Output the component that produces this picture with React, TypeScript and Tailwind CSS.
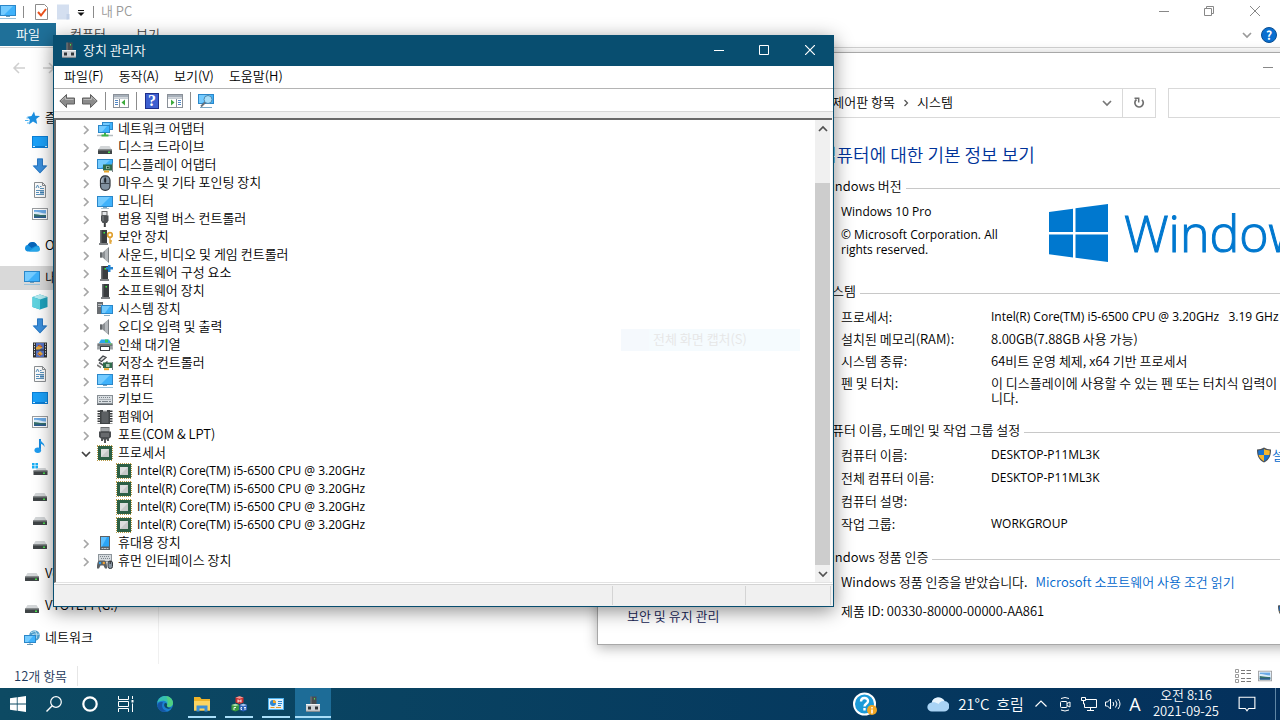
import type { ReactNode } from 'react';

type IconProps = { className?: string };

function Svg({ children, className = 'size-4', box = 16 }: { children: ReactNode; className?: string; box?: number }) {
  return (
    <svg viewBox={`0 0 ${box} ${box}`} className={`${className} shrink-0`} aria-hidden="true" fill="none">
      {children}
    </svg>
  );
}

/* ---------- device and folder icons ---------- */

function Screen({ x = 0, y = 2, w = 16, h = 10 }: { x?: number; y?: number; w?: number; h?: number }) {
  return (
    <>
      <rect x={x} y={y} width={w} height={h} fill="#2b87c9" />
      <rect x={x + 1} y={y + 1} width={w - 2} height={h - 2} fill="#3fb2fb" />
      <path d={`M${x + 1} ${y + 1}h${w - 4}L${x + 4} ${y + h - 1}H${x + 1}z`} fill="#74cbff" />
    </>
  );
}

const IconComputer = ({ className }: IconProps) => (
  <Svg className={className}>
    <Screen y={1} h={11} />
    <path d="M6 12.5h4" stroke="#6d9dbb" />
    <path d="M0 14.500h16" stroke="#9cc3da" />
  </Svg>
);
const IconMonitor = () => (
  <Svg>
    <Screen y={3} h={11} />
    <path d="M6 14.500h4" stroke="#7aa7c4" />
    <path d="M4 15.500h8" stroke="#a8c2d2" />
  </Svg>
);
const IconNetAdapter = () => (
  <Svg>
    <Screen x={5} y={1} w={11} h={8} />
    <Screen x={1} y={4} w={12} h={8} />
    <path d="M0 14.500h16" stroke="#b4bcc0" strokeWidth="1.500" />
    <path d="M7 12h2v1.500h2.500v2h-7v-2H7z" fill="#3fb54a" />
  </Svg>
);
const IconDisk = ({ className }: IconProps) => (
  <Svg className={className}>
    <path d="M3.500 7h9L15 11H1z" fill="#d3d6d8" />
    <rect x="1" y="10.500" width="14" height="4.500" rx="0.500" fill="#3f4446" />
    <rect x="1" y="10.500" width="14" height="1" fill="#85898b" />
    <rect x="11" y="12.500" width="2" height="1.500" fill="#49e04f" />
  </Svg>
);
const IconDisplay = () => (
  <Svg>
    <Screen y={2} h={10} />
    <rect x="6" y="7.500" width="10" height="6" fill="#2f6b4b" />
    <rect x="9" y="9" width="3.500" height="3" fill="#8fb79e" />
    <rect x="10" y="9.800" width="1.800" height="1.500" fill="#1d3c2c" />
    <path d="M7 14.500h5" stroke="#e7a52a" strokeWidth="2" />
    <path d="M15.500 6v9" stroke="#7c8488" />
  </Svg>
);
const IconMouse = () => (
  <Svg>
    <rect x="3.500" y="0.800" width="9.500" height="14.500" rx="4.500" fill="#8191a0" stroke="#30363c" strokeWidth="1.200" />
    <path d="M8.200 1.500v7M4 8.500h8.500" stroke="#3c4650" />
    <rect x="7.200" y="3" width="2" height="4.500" rx="1" fill="#20262c" />
    <path d="M5.500 3.500c-.8 1-.8 3-.8 4" stroke="#c6d1da" />
  </Svg>
);
const IconUsb = () => (
  <Svg>
    <rect x="5" y="0.500" width="5" height="4" fill="#e4e6e8" stroke="#666" />
    <path d="M4 4.500h7.500v5L10 12H5.500L4 9.500z" fill="#4d5052" />
    <path d="M6 5v5" stroke="#84878a" />
    <path d="M7.800 12v4" stroke="#3b3d3e" strokeWidth="2" />
  </Svg>
);
function Tower({ x = 5 }: { x?: number }) {
  return (
    <>
      <rect x={x} y="1" width="7" height="13" fill="#3a3d40" />
      <rect x={x} y="1" width="1.500" height="13" fill="#6b6f73" />
      <rect x={x + 3.5} y="3" width="1.500" height="1.500" fill="#39ee43" />
      <path d={`M${x - 1} 15h9`} stroke="#55595c" strokeWidth="1.500" />
    </>
  );
}
const IconSecurity = () => (
  <Svg>
    <Tower x={3} />
    <circle cx="13" cy="6" r="2.300" stroke="#e0a02e" strokeWidth="1.700" />
    <path d="M13 8v6.500M13 12h2M13 14h1.500" stroke="#e0a02e" strokeWidth="1.300" />
  </Svg>
);
const IconSoftComponent = () => (
  <Svg>
    <Tower x={4} />
    <path d="M11 0h2.500v2H16v2.500h-2.500V7H11V4.500H9V2h2z" fill="#2583cf" />
  </Svg>
);
const IconSoftDevice = () => (
  <Svg>
    <Tower x={5} />
  </Svg>
);
const IconSpeaker = () => (
  <Svg>
    <path d="M3 5.500h2.500L11.500 0.500v15L5.500 10.500H3z" fill="#8c9094" />
    <path d="M8 3.500L11.500 0.500v15L8 12.500z" fill="#b4b8bc" />
    <path d="M3 5.500h2v5H3z" fill="#64686c" />
    <path d="M11.500 0.500v15" stroke="#7c8084" />
  </Svg>
);
const IconSystemDevice = () => (
  <Svg>
    <rect x="0" y="1" width="6" height="12" fill="#6a6e72" />
    <path d="M1 3.500h4M1 5.500h4" stroke="#b8bcc0" />
    <Screen x={4} y={4} w={12} h={9} />
    <path d="M7 14.500h6" stroke="#8aaec4" />
  </Svg>
);
const IconPrinter = () => (
  <Svg>
    <path d="M4 2.500h8l2 3.500H2z" fill="#2fa6e8" />
    <rect x="8" y="2.500" width="3" height="3" fill="#36c95a" />
    <path d="M0.500 6h15l.5 6.500H0z" fill="#9ba0a3" />
    <path d="M0.500 8h15" stroke="#4a4f52" />
    <rect x="3.500" y="9.500" width="9" height="4" fill="#fff" stroke="#3d4144" />
    <rect x="12.500" y="6.500" width="2" height="1" fill="#4de05a" />
  </Svg>
);
const IconStorage = () => (
  <Svg>
    <path d="M2 5l4-4 3 1.500-4.500 4z" stroke="#45494c" strokeWidth="1.300" fill="#e4e4e4" />
    <path d="M2 7.500l4.500 3 4-4" stroke="#55595c" strokeWidth="1.600" />
    <rect x="6" y="7.500" width="9" height="5.500" fill="#2f6b4b" />
    <rect x="9" y="9" width="3.500" height="3" fill="#a9c9b6" />
    <path d="M7 14.200h5" stroke="#e7a52a" strokeWidth="2" />
    <path d="M15.500 7v8" stroke="#70787c" />
    <path d="M0 10l4 2.500" stroke="#777" strokeWidth="1.500" />
  </Svg>
);
const IconKeyboard = () => (
  <Svg>
    <rect x="0.500" y="4.500" width="15" height="8" fill="#d9dee2" stroke="#878e94" />
    <path d="M2 6.500h12M2.500 8.500h11" stroke="#7a838a" strokeDasharray="1 1" />
    <path d="M2 10.500h2m1 0h6m1 0h2" stroke="#7a838a" />
    <path d="M0 13.500h16" stroke="#62686d" />
  </Svg>
);
const IconFirmware = () => (
  <Svg>
    <path d="M2 1.500v13M14 1.500v13" stroke="#3a3d3f" strokeWidth="3" strokeDasharray="1.500 1" />
    <rect x="3" y="1" width="10" height="14" fill="#3f4345" />
    <path d="M4.500 3h7v11h-7z" fill="#5c6063" />
    <path d="M6 1h4v1.500H6z" fill="#d0d2d3" />
  </Svg>
);
const IconPort = () => (
  <Svg>
    <rect x="4" y="0.500" width="8" height="4" fill="#c9cccf" stroke="#6b6e70" />
    <path d="M6 1v3M8 1v3M10 1v3" stroke="#7d8082" />
    <path d="M2 4.500h12v5.500l-3 2.500H5L2 10z" fill="#4a4d50" />
    <path d="M4 7h8M4 9h8" stroke="#85888b" />
    <path d="M8 12v4M5 12v2M11 12v2" stroke="#45484a" strokeWidth="1.800" />
  </Svg>
);
const IconCpu = () => (
  <Svg>
    <path d="M0 .5h15M0 15.500h15M.5 1v14M15.500 1v14" stroke="#b99a45" strokeDasharray="1 1" />
    <rect x="1" y="1" width="14" height="14" fill="#2c5f45" />
    <rect x="4" y="4" width="8" height="8" fill="#dcdede" />
    <path d="M12 4v8H4z" fill="#c6c9c9" />
  </Svg>
);
const IconPortable = () => (
  <Svg>
    <rect x="3" y="1" width="10" height="14" fill="#5c6165" />
    <rect x="4" y="2" width="8" height="9.500" fill="#2ba5f7" />
    <path d="M4 2h6L5 11.500H4z" fill="#5fc0ff" />
    <path d="M4.500 13.500h7" stroke="#c0c5c9" strokeDasharray="2 0.500" />
  </Svg>
);
const IconHid = () => (
  <Svg>
    <rect x="1.500" y="1.500" width="13" height="7" fill="#d5dade" stroke="#8d959b" />
    <path d="M3 3.500h10M4 5.500h9" stroke="#7b848b" strokeDasharray="1 1" />
    <path d="M0 15.500c-.3-4 .8-8 2.500-8h5c1.700 0 2.800 4 2.500 8H8l-1.500-3h-3l-1.500 3z" fill="#5b6064" />
    <circle cx="3" cy="10" r="1.200" fill="#35a0e8" />
    <circle cx="6.800" cy="10" r="1.200" fill="#f0a030" />
    <rect x="11" y="8" width="4.500" height="7.500" rx="2" fill="#8794a0" stroke="#34393e" />
    <path d="M13.200 8v3" stroke="#222" />
  </Svg>
);
const IconDevMgr = () => (
  <Svg>
    <rect x="5.500" y="0.500" width="6" height="8" fill="#4a4e52" />
    <path d="M6 0.500v8" stroke="#7b7f83" />
    <rect x="9" y="2" width="1" height="1.500" fill="#4be050" />
    <rect x="1" y="8" width="14" height="7.500" rx="1" fill="#cfd3d6" />
    <path d="M1 8.500h14" stroke="#f2f3f4" />
    <rect x="3" y="10.500" width="3" height="3" fill="#32363a" />
    <rect x="10" y="10.500" width="3" height="3" fill="#32363a" />
    <path d="M1 15.300h14" stroke="#85898d" />
  </Svg>
);

const IconStar = () => (
  <Svg>
    <path d="M10 1.500l1.200 4.200 4.800.3-3.800 3 1 5-4.200-2.600-4 3.100.8-4.800-2.600-3 4.300-.7z" fill="#1c8fe0" />
    <path d="M1 10.500h3.500M3 13h2.500M2.500 8h2" stroke="#4bb3f2" />
  </Svg>
);
const IconDesktop = () => (
  <Svg>
    <rect x="0" y="2" width="16" height="12" fill="#0c7fd6" />
    <rect x="1" y="3" width="14" height="9" fill="#1ba1f8" />
    <path d="M1 12.500h2M13 12.500h2" stroke="#d4efff" />
  </Svg>
);
const IconDownload = () => (
  <Svg>
    <path d="M5 0.500h6v7h4.500L8 15.500.5 7.500H5z" fill="#3b8fdc" />
    <path d="M5.500 1h5v7h3.800L8 14.800 1.700 8h3.800z" stroke="#2672bd" strokeWidth="0.800" />
  </Svg>
);
const IconDoc = () => (
  <Svg>
    <path d="M2.500 0.500h8l3 3v12h-11z" fill="#fdfdfd" stroke="#8b8f92" />
    <path d="M10.500 0.500v3h3" stroke="#8b8f92" />
    <path d="M4 6l1.500-3L7 6M8 4.500h1.500M8 6.500h4M4 8.500h8M4 10.500h3M4 12.500h8" stroke="#5b93bd" />
    <rect x="8" y="9.500" width="4" height="2" fill="#3f7fb2" />
  </Svg>
);
const IconPicture = ({ className }: IconProps) => (
  <Svg className={className}>
    <rect x="0.500" y="2.500" width="15" height="11" fill="#fff" stroke="#9a9da0" />
    <rect x="2" y="4" width="12" height="8" fill="#6aa9e6" />
    <path d="M2 6c3-1 7 1.500 12 1.500V9H2z" fill="#dcecf8" />
    <path d="M2 8c3 0 6 1.500 12 1v3H2z" fill="#36706a" />
    <path d="M2 10.500h12V12H2z" fill="#2c5b93" />
  </Svg>
);
const IconOneDrive = () => (
  <Svg>
    <path d="M3.500 13.500a3.500 3.500 0 01.3-6.800A5 5 0 0113 7.200a3.200 3.200 0 01-.2 6.300z" fill="#1490df" />
    <path d="M3.800 6.700A5 5 0 0113 7.200L7.500 10z" fill="#0864b8" />
    <path d="M5 13.500l6-4.500c3-1.500 5 .5 5 2.500 0 1.500-1.500 2-2.500 2z" fill="#28a8ea" />
  </Svg>
);
const Icon3D = () => (
  <Svg>
    <path d="M8 0.500l7.500 2.500v10L8 15.500.5 13V3z" fill="#1fa3bd" />
    <path d="M8 0.500l7.500 2.500L8 5.500.5 3z" fill="#b5ecf2" />
    <path d="M.5 3L8 5.500v10L.5 13z" fill="#5fd3df" />
  </Svg>
);
const IconVideo = () => (
  <Svg>
    <rect x="1" y="0.500" width="14" height="15" fill="#2f3133" />
    <path d="M2.500 1.500v13M13.500 1.500v13" stroke="#e9e9e9" strokeDasharray="1.300 1.300" />
    <rect x="4" y="1" width="8" height="6.500" fill="#5673c4" />
    <rect x="4" y="8.500" width="8" height="6.500" fill="#5673c4" />
    <path d="M4 5.500l4-3 2.500 3-3 2h-3.500zM5 12l3-3 3 3-3 2z" fill="#e7a93a" />
    <path d="M6 3.500l4 1M6 11.500l3 2" stroke="#b8452c" />
  </Svg>
);
const IconMusic = () => (
  <Svg>
    <path d="M8 1v10.500" stroke="#1588dd" strokeWidth="2" />
    <path d="M8 0.500c0 3.500 5 4 4.500 8.500-1-2.500-3-3-4.500-3z" fill="#1e9cf0" />
    <ellipse cx="5.800" cy="12.300" rx="3.300" ry="2.700" fill="#1e9cf0" />
  </Svg>
);
const IconSystemDisk = () => (
  <Svg>
    <path d="M0 1h2.600v2.400H0zM3.400 1H6v2.400H3.400zM0 4.100h2.600v2.400H0zM3.400 4.100H6v2.400H3.400z" fill="#18aef5" />
    <path d="M6.500 6h7l1.500 3H2z" fill="#d3d6d8" />
    <rect x="1.500" y="8.500" width="14" height="4.500" fill="#3f4446" />
    <rect x="1.500" y="8.500" width="14" height="1" fill="#85898b" />
    <rect x="11" y="10.500" width="2" height="1.500" fill="#49e04f" />
  </Svg>
);
const IconNetwork = () => (
  <Svg>
    <circle cx="10.500" cy="5.500" r="5.300" fill="#4c9cc9" />
    <path d="M7 2.500c2 0 3-1.500 5-1.500M8 5c3-2 5 0 7.500-1M10.500.5c3 3 3 7 0 10" stroke="#b8dff2" />
    <Screen x={0} y={5} w={12} h={8} />
    <path d="M3 14.500h6M6 13v2" stroke="#6b97b3" />
  </Svg>
);

function Chevron({ className, dir = 'right' }: IconProps & { dir?: 'right' | 'down' | 'up' }) {
  const d = { right: 'M3 1l4 4-4 4', down: 'M1 3l4 4 4-4', up: 'M1 7l4-4 4 4' }[dir];
  return (
    <Svg box={10} className={`size-2.5 ${className ?? ''}`}>
      <path d={d} stroke="currentColor" strokeWidth="1.700" />
    </Svg>
  );
}

function Shield() {
  return (
    <Svg>
      <path d="M8 .5c2 1.300 4.500 2 7 2 0 6-1.500 10.500-7 13C2.500 13 1 8.500 1 2.500c2.500 0 5-.7 7-2z" fill="#4a4f55" />
      <path d="M8 2v6H2.600C2.300 6.500 2.200 5 2.200 3.500 4.300 3.400 6.300 3 8 2z" fill="#1a73cf" />
      <path d="M8 2v6h5.400c.3-1.500.4-3 .4-4.500C11.700 3.400 9.700 3 8 2z" fill="#f7b62b" />
      <path d="M2.600 8H8v6.200C5 12.800 3.300 10.800 2.600 8z" fill="#f7b62b" />
      <path d="M13.400 8H8v6.200c3-1.400 4.700-3.400 5.400-6.200z" fill="#1a73cf" />
    </Svg>
  );
}

/* ---------- file explorer ---------- */

function NavItem({ icon, label, child, active }: { icon: ReactNode; label: string; child?: boolean; active?: boolean }) {
  return (
    <li className={active ? 'bg-[#d9d9d9]' : ''}>
      <a
        href="#"
        aria-label={label}
        className={`flex h-6 items-center gap-[5px] whitespace-nowrap text-black ${child ? 'pl-8' : 'pl-6'}`}
      >
        {icon}
        {!child && <span className="pb-0.5">{label}</span>}
      </a>
    </li>
  );
}

function Explorer() {
  return (
    <section aria-label="내 PC" className="flex min-h-0 flex-1 flex-col bg-white">
      <header className="flex h-[23px] items-center text-[#999]">
        <IconComputer />
        <span className="ml-[7px] h-3 w-px bg-[#8a8a8a]" />
        <button aria-label="속성" className="ml-2.5">
          <Svg>
            <path d="M1.500 0.500h9l3 3v12h-12z" fill="#fff" stroke="#8c8c8c" />
            <path d="M4 8l3 3.500L12 5" stroke="#e8501c" strokeWidth="2" />
          </Svg>
        </button>
        <button aria-label="새 폴더" className="ml-1.5">
          <Svg>
            <path d="M1 0.500h12v13l-1.500 2H1z" fill="#d4dff0" />
            <path d="M10.500 10h3v5.500h-3z" fill="#c2d1e8" />
          </Svg>
        </button>
        <button aria-label="사용자 지정" className="ml-1">
          <Svg box={10} className="size-2.5">
            <path d="M2 3.500h6" stroke="#111" />
            <path d="M1.500 5.500h7L5 9z" fill="#111" />
          </Svg>
        </button>
        <span className="ml-[7px] h-3 w-px bg-[#8a8a8a]" />
        <h1 className="ml-[7px] flex-1 pb-0.5">내 PC</h1>
        <div className="flex items-center">
          <button aria-label="최소화" className="flex w-[45px] justify-center">
            <Svg box={10} className="size-2.5"><path d="M0 4.500h10" stroke="#888" /></Svg>
          </button>
          <button aria-label="이전 크기로" className="flex w-[46px] justify-center pb-0.5">
            <Svg box={10} className="size-2.5"><path d="M.5 2.500h7v7h-7zM2.500 2.500v-2h7v7h-2" stroke="#888" /></Svg>
          </button>
          <button aria-label="닫기" className="mr-0.5 flex w-[46px] justify-center pb-0.5">
            <Svg box={10} className="size-2.5"><path d="M0 0l10 10M10 0L0 10" stroke="#888" /></Svg>
          </button>
        </div>
      </header>

      <nav className="flex h-[25px] items-center border-b border-[#d4d4d4]">
        <button className="h-[23px] w-14 self-start bg-[#1f7099] pb-0.5 text-white">파일</button>
        <button className="w-16 pb-0.5 text-[#444]">컴퓨터</button>
        <button className="w-14 pb-0.5 text-[#444]">보기</button>
        <span className="flex-1" />
        <button aria-label="리본 확장" className="mr-[9px] text-[#9a9a9a]">
          <Chevron dir="down" />
        </button>
        <button aria-label="도움말" className="mr-[3px]">
          <span className="flex size-4 items-center justify-center rounded-full border border-[#0b4f92] bg-[#0a6fd0] text-xs font-bold text-white">?</span>
        </button>
      </nav>

      <div className="flex h-10 items-center gap-4 pl-3 text-[#cfcfcf]">
        <button aria-label="뒤로">
          <Svg box={14} className="size-3.5"><path d="M13 7H2M7 2L2 7l5 5" stroke="currentColor" strokeWidth="1.500" /></Svg>
        </button>
        <button aria-label="앞으로">
          <Svg box={14} className="size-3.5"><path d="M1 7h11M7 2l5 5-5 5" stroke="currentColor" strokeWidth="1.500" /></Svg>
        </button>
      </div>

      <div className="flex min-h-0 flex-1">
        <nav className="w-[159px] border-r border-[#f0f0f0] pt-[18px]">
          <ul className="flex flex-col gap-2">
            <li>
              <ul>
                <NavItem icon={<IconStar />} label="즐겨찾기" />
                <NavItem child icon={<IconDesktop />} label="바탕 화면" />
                <NavItem child icon={<IconDownload />} label="다운로드" />
                <NavItem child icon={<IconDoc />} label="문서" />
                <NavItem child icon={<IconPicture />} label="사진" />
              </ul>
            </li>
            <NavItem icon={<IconOneDrive />} label="OneDrive" />
            <li>
              <ul>
                <NavItem active icon={<IconComputer />} label="내 PC" />
                <NavItem child icon={<Icon3D />} label="3D 개체" />
                <NavItem child icon={<IconDownload />} label="다운로드" />
                <NavItem child icon={<IconVideo />} label="동영상" />
                <NavItem child icon={<IconDoc />} label="문서" />
                <NavItem child icon={<IconDesktop />} label="바탕 화면" />
                <NavItem child icon={<IconPicture />} label="사진" />
                <NavItem child icon={<IconMusic />} label="음악" />
                <NavItem child icon={<IconSystemDisk />} label="로컬 디스크 (C:)" />
                <NavItem child icon={<IconDisk />} label="로컬 디스크 (D:)" />
                <NavItem child icon={<IconDisk />} label="로컬 디스크 (E:)" />
                <NavItem child icon={<IconDisk />} label="로컬 디스크 (F:)" />
              </ul>
            </li>
            <NavItem icon={<IconDisk />} label="Ventoy (F:)" />
            <NavItem icon={<IconDisk />} label="VTOYEFI (G:)" />
            <NavItem icon={<IconNetwork />} label="네트워크" />
          </ul>
        </nav>
        <div className="flex-1" />
      </div>

      <footer className="flex h-6 items-center pl-3.5 pr-2 text-[#1e395b]">
        <span className="w-16 border-r border-[#e6e6e6]">12개 항목</span>
        <span className="flex-1" />
        <button aria-label="자세히">
          <Svg>
            <path d="M.5 1.500h3v3h-3zM.5 6.500h3v3h-3zM.5 11.500h3v3h-3z" stroke="#9a9a9a" />
            <path d="M6 2.500h4m1.500 0H16M6 5.500h4m1.500 0H16M6 10.500h4m1.500 0H16M6 13.500h4m1.500 0H16" stroke="#777" />
          </Svg>
        </button>
        <button aria-label="큰 아이콘" className="ml-[7px]">
          <IconPicture className="size-3.5" />
        </button>
      </footer>
    </section>
  );
}

/* ---------- system information window ---------- */

function Legend({ children }: { children: ReactNode }) {
  return (
    <h3 className="flex h-4 items-center gap-1 whitespace-nowrap leading-4">
      <span className="pb-0.5">{children}</span>
      <span className="mt-0.5 h-px flex-1 bg-[#c8c8c8]" />
    </h3>
  );
}

const specs: [string, ReactNode, boolean][] = [
  ['프로세서:', 'Intel(R) Core(TM) i5-6500 CPU @ 3.20GHz   3.19 GHz', true],
  ['설치된 메모리(RAM):', '8.00GB(7.88GB 사용 가능)', false],
  ['시스템 종류:', '64비트 운영 체제, x64 기반 프로세서', false],
  ['펜 및 터치:', <>이 디스플레이에 사용할 수 있는 펜 또는 터치식 입력이 없습<br />니다.</>, false],
];

const names: [string, string][] = [
  ['컴퓨터 이름:', 'DESKTOP-P11ML3K'],
  ['전체 컴퓨터 이름:', 'DESKTOP-P11ML3K'],
  ['컴퓨터 설명:', ''],
  ['작업 그룹:', 'WORKGROUP'],
];

function SystemWindow() {
  return (
    <section
      aria-label="시스템"
      className="absolute left-[597px] top-[52px] w-[800px] border border-[#a8a8a8] bg-white shadow-[0_3px_12px_rgba(0,0,0,0.3)]"
    >
      <div className="flex h-[35px] items-center pl-[664px]">
        <button aria-label="최소화" className="mb-2">
          <Svg box={12} className="size-3"><path d="M1 6.500h10" stroke="#888" /></Svg>
        </button>
      </div>
      <div className="flex h-[30px]">
        <div className="ml-[142px] flex w-[416px] items-center border border-[#d9d9d9]">
          <div className="flex flex-1 items-center">
            <span className="w-[154px] pb-0.5 text-right">모든 제어판 항목</span>
            <Chevron className="mx-1.5 scale-75 text-[#555]" />
            <span className="pb-0.5">시스템</span>
          </div>
          <button aria-label="이전 위치" className="mr-2.5 text-[#777]"><Chevron dir="down" /></button>
          <button aria-label="새로 고침" className="flex h-full w-[33px] items-center justify-center border-l border-[#d9d9d9]">
            <Svg box={12} className="size-3">
              <path d="M9 2.800a4.200 4.200 0 11-5.500-.3" stroke="#707070" strokeWidth="1.700" />
              <path d="M1.500 1.200h4.200v4.200" stroke="#707070" strokeWidth="1.500" />
            </Svg>
          </button>
        </div>
        <input aria-label="제어판 검색" className="ml-3 w-[200px] border border-[#d9d9d9] px-2" />
      </div>

      <div className="flex">
        <aside className="flex w-[222px] shrink-0 items-end pb-[19px] pl-[29px]">
          <a href="#" className="text-[#151c55]">보안 및 유지 관리</a>
        </aside>
        <div className="min-w-0 flex-1 pb-[25px] pt-6">
          <h2 className="text-lg leading-6 whitespace-nowrap text-[#003399]">컴퓨터에 대한 기본 정보 보기</h2>

          <div className="mt-[13px]"><Legend>Windows 버전</Legend></div>
          <div className="flex items-start pl-[21px] font-['Open_Sans',sans-serif] text-xs leading-[15px] font-normal">
            <div className="w-[208px] shrink-0 pt-[9px]">
              <p className="leading-4">Windows 10 Pro</p>
              <p className="mt-[7px]">© Microsoft Corporation. All<br />rights reserved.</p>
            </div>
            <div className="-mb-2 flex items-center gap-4 pt-[9px]">
              <svg viewBox="0 0 59 58" className="h-[58px] w-[59px] shrink-0" aria-hidden="true">
                <path d="M0 8l24-3.300V28H0zM26.500 4.300L59 0v28H26.500zM0 30.500h24v23L0 50.200zM26.500 30.500H59V58l-32.500-4.300z" fill="#0078cf" />
              </svg>
              <span className="text-[50px] leading-[58px] font-light whitespace-nowrap text-[#0078cf] [-webkit-text-stroke:1px_#0078cf]">Windows 10</span>
            </div>
          </div>

          <div className="mt-[27px]"><Legend>시스템</Legend></div>
          <dl className="mt-[5px] pl-[21px] leading-[15px]">
            {specs.map(([k, v, latin]) => (
              <div key={k} className="flex pb-[3px] pt-1">
                <dt className="w-[150px] shrink-0">{k}</dt>
                <dd className={`whitespace-pre ${latin ? "font-['Open_Sans',sans-serif] text-xs leading-[15px] font-normal" : ''}`}>{v}</dd>
              </div>
            ))}
          </dl>

          <div className="mt-[15px]"><Legend>컴퓨터 이름, 도메인 및 작업 그룹 설정</Legend></div>
          <div className="mt-1 flex pl-[21px]">
            <dl className="w-[415px] shrink-0 leading-[15px]">
              {names.map(([k, v]) => (
                <div key={k} className="flex h-[23px] items-center">
                  <dt className="w-[150px]">{k}</dt>
                  <dd className="font-['Open_Sans',sans-serif] text-xs font-normal">{v}</dd>
                </div>
              ))}
            </dl>
            <a href="#" className="flex h-[23px] items-center whitespace-nowrap text-[#0066cc]">
              <Shield />설정 변경
            </a>
          </div>

          <div className="mt-[15px]"><Legend>Windows 정품 인증</Legend></div>
          <p className="mt-2 flex gap-2 whitespace-nowrap pl-[21px] leading-4">
            <span>Windows 정품 인증을 받았습니다.</span>
            <a href="#" className="text-[#0066cc]">Microsoft 소프트웨어 사용 조건 읽기</a>
          </p>
          <div className="mt-[13px] flex h-4 items-center pl-[21px] leading-4">
            <p className="w-[436px] shrink-0">제품 ID: 00330-80000-00000-AA861</p>
            <Shield />
          </div>
        </div>
      </div>
    </section>
  );
}

/* ---------- device manager ---------- */

const devices: [string, ReactNode][] = [
  ['네트워크 어댑터', <IconNetAdapter />],
  ['디스크 드라이브', <IconDisk />],
  ['디스플레이 어댑터', <IconDisplay />],
  ['마우스 및 기타 포인팅 장치', <IconMouse />],
  ['모니터', <IconMonitor />],
  ['범용 직렬 버스 컨트롤러', <IconUsb />],
  ['보안 장치', <IconSecurity />],
  ['사운드, 비디오 및 게임 컨트롤러', <IconSpeaker />],
  ['소프트웨어 구성 요소', <IconSoftComponent />],
  ['소프트웨어 장치', <IconSoftDevice />],
  ['시스템 장치', <IconSystemDevice />],
  ['오디오 입력 및 출력', <IconSpeaker />],
  ['인쇄 대기열', <IconPrinter />],
  ['저장소 컨트롤러', <IconStorage />],
  ['컴퓨터', <IconComputer />],
  ['키보드', <IconKeyboard />],
  ['펌웨어', <IconFirmware />],
  ['포트(COM & LPT)', <IconPort />],
  ['프로세서', <IconCpu />],
  ['휴대용 장치', <IconPortable />],
  ['휴먼 인터페이스 장치', <IconHid />],
];

const cores = [0, 1, 2, 3];

function Tree() {
  return (
    <ul className="flex-1 pb-3 pl-[25px]">
      {devices.map(([label, icon]) => {
        const open = label === '프로세서';
        return (
          <li key={label}>
            <div className="flex h-[18px] items-center">
              <button aria-label={label} aria-expanded={open} className={`mr-1.5 mt-0.5 ${open ? 'text-[#404040]' : 'text-[#a6a6a6]'}`}>
                <Chevron dir={open ? 'down' : 'right'} />
              </button>
              {icon}
              <span className="ml-[5px] pb-0.5 leading-4">{label}</span>
            </div>
            {open && (
              <ul className="pl-[35px]">
                {cores.map((n) => (
                  <li key={n} className="flex h-[18px] items-center gap-[5px]">
                    <IconCpu />
                    <span className="font-['Open_Sans',sans-serif] text-xs leading-4 font-normal">Intel(R) Core(TM) i5-6500 CPU @ 3.20GHz</span>
                  </li>
                ))}
              </ul>
            )}
          </li>
        );
      })}
    </ul>
  );
}

function ConsolePane({ flip }: { flip?: boolean }) {
  return (
    <Svg>
      <rect x="0.500" y="1.500" width="15" height="13" fill="#fff" stroke="#8a9098" />
      <rect x="1" y="2" width="14" height="2.500" fill="#a7b0ba" />
      <path d="M1 5.500h14" stroke="#c5ccd3" />
      <g transform={flip ? 'matrix(-1 0 0 1 16 0)' : undefined}>
        <path d="M2 7.500h3M2 9.500h3M2 11.500h3" stroke="#4f86c6" />
        <path d="M6.500 6v8" stroke="#8a9098" />
        <path d="M12 6.500v6L8.500 9.500z" fill="#3cab3c" />
      </g>
    </Svg>
  );
}

function ToolArrow({ flip }: { flip?: boolean }) {
  return (
    <Svg>
      <g transform={flip ? 'matrix(-1 0 0 1 16 0)' : undefined}>
        <path d="M.8 8L7.500 1.500V5h8v6h-8v3.500z" fill="#8b8b8b" stroke="#5f5f5f" />
        <path d="M2.500 7.500L6.500 4v2.500h8" stroke="#b9b9b9" />
      </g>
    </Svg>
  );
}

function DeviceManager() {
  const sep = <span className="h-[18px] w-px bg-[#8c8c8c]" />;
  return (
    <section
      aria-label="장치 관리자"
      className="absolute left-[53px] top-[35px] flex w-[781px] flex-col border border-t-0 border-[#084e70] bg-white shadow-[0_4px_18px_rgba(0,0,0,0.45)]"
    >
      <header className="flex h-[31px] items-center bg-[#084e70] pb-0.5 pl-[7px] text-white">
        <IconDevMgr />
        <h2 className="ml-1.5 flex-1">장치 관리자</h2>
        <button aria-label="최소화" className="flex w-[45px] justify-center">
          <Svg box={10} className="size-2.5"><path d="M0 5.500h10" stroke="#fff" /></Svg>
        </button>
        <button aria-label="최대화" className="flex w-[46px] justify-center">
          <Svg box={10} className="size-2.5"><path d="M.5 .5h9v9h-9z" stroke="#fff" /></Svg>
        </button>
        <button aria-label="닫기" className="flex w-[46px] justify-center">
          <Svg box={10} className="size-2.5"><path d="M0 0l10 10M10 0L0 10" stroke="#fff" strokeWidth="1.200" /></Svg>
        </button>
      </header>
      <nav className="flex h-[23px] items-center gap-[15px] border-b border-[#b4b4b4] pb-0.5 pl-2.5">
        <button>파일(F)</button>
        <button>동작(A)</button>
        <button>보기(V)</button>
        <button>도움말(H)</button>
      </nav>
      <div className="flex h-[23px] items-center gap-[7px] border-b border-[#d8d8d8] pl-[5px] pt-0.5">
        <button aria-label="뒤로"><ToolArrow /></button>
        <button aria-label="앞으로"><ToolArrow flip /></button>
        {sep}
        <button aria-label="콘솔 트리 표시/숨기기"><ConsolePane /></button>
        {sep}
        <button aria-label="도움말" className="flex w-4 justify-center">
          <span className="flex h-4 w-3.5 items-center justify-center border border-[#1d2f8c] bg-[#3d5fd0] font-['Liberation_Serif',serif] text-base font-bold text-white">?</span>
        </button>
        <button aria-label="작업 창 표시/숨기기"><ConsolePane flip /></button>
        {sep}
        <button aria-label="하드웨어 변경 사항 검색">
          <Svg>
            <Screen y={1} h={10} />
            <path d="M2 14.500h12" stroke="#7aa7c4" />
            <circle cx="10" cy="6.500" r="4" fill="#a8def9" stroke="#4e87ad" />
            <path d="M7 9.500l-4 4" stroke="#66707a" strokeWidth="1.800" />
          </Svg>
        </button>
      </div>
      <div className="bg-[#f0f0f0] pt-1.5">
        <div className="mr-px flex border-b border-l-2 border-t-2 border-b-[#e3e3e3] border-l-[#696969] border-t-[#696969] bg-white">
          <Tree />
          <div className="flex w-[15px] flex-col items-center bg-[#f0f0f0] text-[#505050]">
            <button aria-label="위로" className="flex h-[63px] pt-1"><Chevron dir="up" /></button>
            <span className="w-full flex-1 bg-[#cdcdcd]" />
            <button aria-label="아래로" className="flex h-[17px] items-center"><Chevron dir="down" /></button>
          </div>
          <span className="w-0.5" />
        </div>
      </div>
      <footer className="mt-px flex h-[22px] border-t border-[#d4d4d4] bg-[#f0f0f0] py-px">
        <span className="flex-1 border-r border-[#d4d4d4]" />
        <span className="w-[133px] border-r border-[#d4d4d4]" />
        <span className="mr-0.5 w-[85px] border-r border-[#d4d4d4]" />
      </footer>

      <div className="absolute left-[567px] top-[294px] flex h-[22px] w-[179px] items-center border-l-[28px] border-[#f5f9fd] bg-[#f5fbfe] pb-0.5 pl-1 text-[#e6e6e6]">전체 화면 캡처(S)</div>
    </section>
  );
}

/* ---------- taskbar ---------- */

function Task({ label, children, wide, running, active }: { label: string; children: ReactNode; wide?: boolean; running?: boolean; active?: boolean }) {
  return (
    <button
      aria-label={label}
      className={`flex h-full flex-col items-center ${wide ? 'w-[37px]' : 'w-9'} ${active ? 'ml-px bg-[#1d6c97]' : ''}`}
    >
      <span className="flex h-7 items-center pt-1">{children}</span>
      <span className={`mt-auto mb-0.5 h-0.5 ${active ? 'w-full' : 'w-7'} ${running ? 'bg-[#a9def9]' : ''}`} />
    </button>
  );
}

function Taskbar() {
  return (
    <footer className="relative flex h-8 items-center bg-linear-to-r from-[#0d4a63] to-[#04305c] text-white">
      <Task label="시작">
        <Svg><path d="M0 2.300l6.800-1v6.300H0zM7.600 1.200L16 0v7.600H7.600zM0 8.400h6.800v6.300l-6.800-1zM7.600 8.400H16V16l-8.400-1.200z" fill="#fff" /></Svg>
      </Task>
      <Task label="검색">
        <Svg><circle cx="10" cy="6" r="5.300" stroke="#fff" strokeWidth="1.200" /><path d="M6.200 9.800L.5 15.500" stroke="#fff" strokeWidth="1.400" /></Svg>
      </Task>
      <Task label="코타나">
        <Svg><circle cx="8" cy="8" r="6.700" stroke="#fff" strokeWidth="2.200" /></Svg>
      </Task>
      <Task label="작업 보기">
        <Svg>
          <path d="M.5 0v3.500h10V0M.5 16v-3.500h10V16M.5 5.500h10v5H.5zM14.500 0v3M14.500 7.500V16" stroke="#fff" />
          <rect x="13.500" y="4" width="2" height="2.500" fill="#fff" />
        </Svg>
      </Task>
      <span className="w-0.5" />
      <Task label="Edge" wide>
        <Svg>
          <circle cx="8" cy="8" r="8" fill="#1b7fd0" />
          <path d="M.2 7C1 2.500 4.500 0 8 0c5 0 8 3.500 8 7 0 2.500-1.800 4-4 4-1.500 0-2.500-.7-2-1.500C11 7 9 4.800 6 4.800 3 4.800.8 6 .2 7z" fill="#35c1b1" />
          <path d="M9 0c4 .3 7 3.500 7 7 0 2.500-1.800 4-4 4-1.500 0-2.500-.7-2-1.500C12 6 10 2 9 0z" fill="#5bd66d" opacity=".7" />
          <path d="M6 6.500c-2 2.500-1 7.500 4 8.700-4 1.800-9-.5-9.800-6C1.500 6 4 5.500 6 6.500z" fill="#1656a3" />
          <path d="M7.500 7.500c-.8 1.500-.3 3.500 1.500 4.500 2 1 4.500.8 6-.5-1 .5-4.500.5-5-1-.4-1.200.3-1.500 0-2.500-.4-1.200-1.900-1.500-2.500-.5z" fill="#0d4a63" />
        </Svg>
      </Task>
      <Task label="파일 탐색기" wide running>
        <Svg>
          <path d="M0 1h6l1.500 2H16v11.500H0z" fill="#f0b429" />
          <path d="M0 5h16v9.500H0z" fill="#fcd462" />
          <path d="M2.500 15.500V9.500h11v6h-3v-3h-5v3z" fill="#3d8fd6" />
        </Svg>
      </Task>
      <Task label="H/W 정보" wide running>
        <Svg>
          <path d="M4.500 1.500l4-1.300 4 1.300v5l-4 1.500-4-1.500z" fill="#cc2f2f" />
          <path d="M4.500 1.500l4-1.300 4 1.300-4 1.200z" fill="#f09a94" />
          <path d="M.5 9l3.800-1.300L8 9v5l-3.700 1.500L.5 14z" fill="#3c9a41" />
          <path d="M.5 9l3.800-1.300L8 9l-3.700 1.300z" fill="#a9dcab" />
          <path d="M8.500 9l3.800-1.300L16 9v5l-3.700 1.500L8.500 14z" fill="#2c62b8" />
          <path d="M8.500 9l3.800-1.300L16 9l-3.700 1.300z" fill="#a5c2ee" />
          <path d="M7 3.500v3M10 3.500v3M7 5h3M3 11.500v2.500M3 11.500h2M11 11.500h-1v2h1M13 11.500h2M14 11.500v2.500" stroke="#fff" strokeWidth=".9" />
        </Svg>
      </Task>
      <Task label="시스템" wide running>
        <Svg>
          <rect x="0" y="2" width="16" height="12" fill="#4fb2ee" />
          <rect x="1" y="3" width="14" height="10" fill="#dff2fd" />
          <circle cx="5" cy="7" r="3" fill="#2e86d0" />
          <path d="M5 7V4a3 3 0 013 3z" fill="#f5a623" />
          <path d="M10 5.500h4M10 7.500h4M10 9.500h3" stroke="#2e86d0" />
          <path d="M2.500 11.500h4M8 11.500h5" stroke="#e59a2a" />
        </Svg>
      </Task>
      <Task label="장치 관리자" running active><IconDevMgr /></Task>

      <span className="flex-1" />

      <button aria-label="도움말">
        <Svg box={24} className="size-6">
          <circle cx="11.500" cy="12" r="10.500" fill="#1b9ad8" stroke="#fff" strokeWidth="2" />
          <path d="M8 9.500c0-4.500 7-4.500 7-.5 0 2.800-3.500 2.800-3.500 5.500M11.500 16v2.500" stroke="#fff" strokeWidth="2.400" />
          <circle cx="19" cy="18" r="5" fill="#f2a623" />
          <path d="M19 15v1.500M19 17.500v4" stroke="#fff" strokeWidth="1.500" />
        </Svg>
      </button>
      <button className="ml-[50px] flex items-center gap-[9px] text-[15px] whitespace-nowrap">
        <Svg box={22} className="size-[22px]">
          <path d="M5 18.500a4.500 4.500 0 01-.3-9A7 7 0 0117.500 8a5 5 0 01-.8 10.500z" fill="#a9d3f5" />
          <path d="M4.700 9.500A7 7 0 0117.500 8c-3-.5-5 1-6 3-2-1.500-5-2-6.800-1.500z" fill="#e8f4fd" />
        </Svg>
        <span className="w-[66px]">21°C&nbsp; 흐림</span>
      </button>
      <div className="ml-2.5 flex items-center">
        <button aria-label="숨겨진 아이콘 표시">
          <Svg box={14} className="size-3.5"><path d="M1.500 9.500L7 4l5.500 5.500" stroke="#fff" strokeWidth="1.200" /></Svg>
        </button>
        <button aria-label="지금 모임 시작" className="ml-[9px]">
          <Svg>
            <rect x="3.500" y="5.500" width="6.500" height="6" rx="1" stroke="#fff" />
            <path d="M10 7.500l3-1.500v5L10 9.500M4 2.500Q8 .5 12 2.500M4 14Q8 16 12 14" stroke="#fff" />
          </Svg>
        </button>
        <button aria-label="네트워크" className="ml-2">
          <Svg>
            <path d="M5 3.500h10.500v8H3.500V8M9.500 11.500v3M6 14.500h7" stroke="#fff" />
            <path d="M.5 1.500h4v3h-4zM2.500 4.500V8h1.500" stroke="#fff" />
          </Svg>
        </button>
        <button aria-label="스피커" className="ml-2">
          <Svg>
            <path d="M.5 6h2l3-3v10l-3-3h-2z" stroke="#fff" />
            <path d="M8 6q1.500 2 0 4M10.500 4.500q3 3.500 0 7M13 3q4 5 0 10" stroke="#fff" />
          </Svg>
        </button>
        <button className="ml-1 w-5 font-['Open_Sans',sans-serif] text-lg font-normal">A</button>
      </div>
      <button className="ml-1.5 w-[70px] pb-0.5 text-center leading-4 whitespace-nowrap">
        <time className="block">오전 8:16</time>
        <time className="block">2021-09-25</time>
      </button>
      <button aria-label="알림 센터" className="ml-[17px]">
        <Svg className="size-[18px]"><path d="M1 2h14v10H9.500L8 14l-1.500-2H1z" stroke="#fff" /></Svg>
      </button>
      <button aria-label="바탕 화면 보기" className="ml-[19px] h-full w-[5px] border-l border-[#5f86a5]" />
    </footer>
  );
}

export default function App() {
  return (
    <main className="relative flex h-screen flex-col overflow-hidden bg-white font-['Noto_Sans_CJK_KR',sans-serif] text-[13px] font-[350] text-black">
      <Explorer />
      <SystemWindow />
      <DeviceManager />
      <Taskbar />
    </main>
  );
}
